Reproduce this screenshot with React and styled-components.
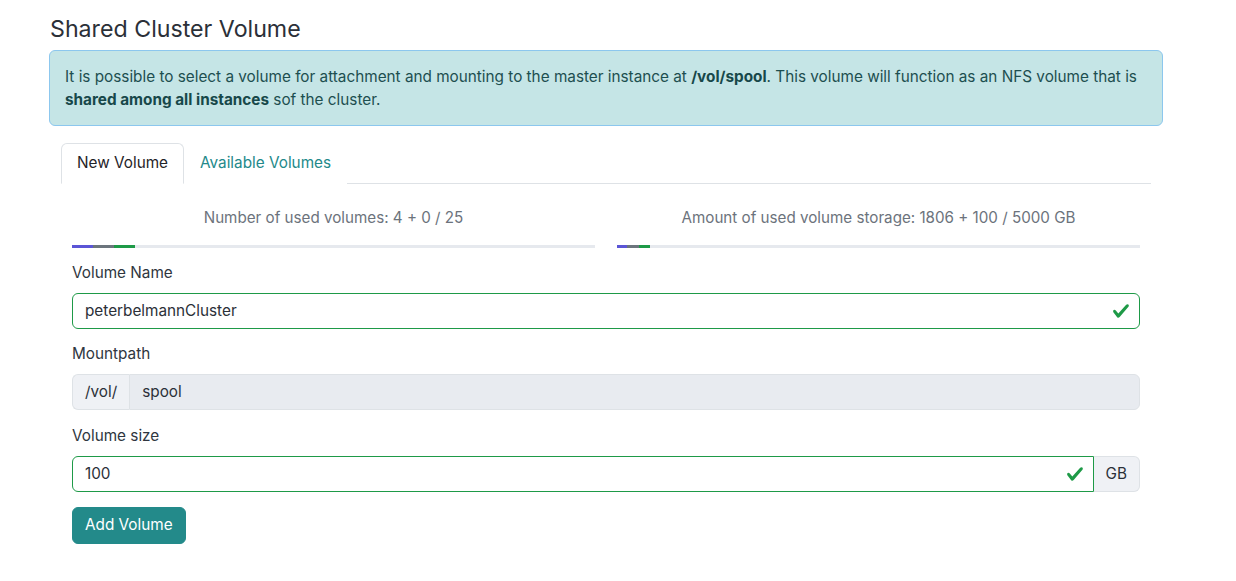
import React, { useState } from 'react'
import styled, { createGlobalStyle } from 'styled-components'

const GlobalStyle = createGlobalStyle`
  body {
    margin: 0;
    background: #ffffff;
    font-family: Inter, "Noto Sans", "Liberation Sans", sans-serif;
    font-size: 15.3px;
    color: #2b3038;
  }
  * { box-sizing: border-box; }
`
const Page = styled.div`
  width: 1114px;
  margin-left: 49px;
  padding-top: 15px;
`
const Title = styled.h2`
  margin: 0 0 6px 1px;
  font-size: 23.2px;
  font-weight: 400;
  line-height: 29px;
  color: #2b3038;
`
const Alert = styled.div`
  background: #c5e5e6;
  border: 1px solid #8cc7ee;
  border-radius: 6px;
  padding: 14px 15px;
  line-height: 23.2px;
  color: #1d4f50;
  b { font-weight: 700; color: #17484a; }
`
const Body = styled.div`
  padding: 0 12px;
  margin-top: 17px;
`
const Tabs = styled.div`
  display: flex;
  border-bottom: 1px solid #dee2e6;
`
const Tab = styled.button`
  font: inherit;
  line-height: 24px;
  padding: 7px 15px 8px;
  margin-bottom: -1px;
  border: 1px solid ${p => (p.active ? '#dee2e6' : 'transparent')};
  border-bottom-color: ${p => (p.active ? '#ffffff' : 'transparent')};
  border-radius: 6px 6px 0 0;
  background: #ffffff;
  color: ${p => (p.active ? '#1f2328' : '#23898a')};
  cursor: pointer;
`
const Content = styled.div`
  padding: 0 11px;
`
const Stats = styled.div`
  display: grid;
  grid-template-columns: 1fr 1fr;
  gap: 22px;
  margin-top: 22px;
`
const Stat = styled.div`
  display: flex;
  flex-direction: column;
  gap: 15px;
`
const StatText = styled.div`
  text-align: center;
  line-height: 24px;
  color: #6c737c;
  font-size: 15.2px;
`
const Bar = styled.div`
  display: flex;
  height: 3px;
  background: #e6e9ee;
`
const Segment = styled.div`
  height: 100%;
  background: ${p => p.color};
`
const Label = styled.label`
  display: block;
  line-height: 24px;
  margin: ${p => p.top || 13}px 0 8px;
  color: #2f3640;
`
const Group = styled.div`
  display: flex;
  position: relative;
`
const Field = styled.div`
  position: relative;
  flex: 1;
  display: flex;
`
const Input = styled.input`
  flex: 1;
  font: inherit;
  line-height: 24px;
  height: 36px;
  padding: 4px 12px 6px;
  border: 1px solid ${p => (p.valid ? '#1e9a47' : '#dee2e6')};
  border-radius: ${p => p.radius || '6px'};
  background: ${p => (p.disabled ? '#e8ebf0' : '#ffffff')};
  color: #2b3038;
  outline: none;
`
const Addon = styled.span`
  display: flex;
  align-items: center;
  padding: 0 12px 2px;
  height: 36px;
  background: #eff1f5;
  border: 1px solid #dee2e6;
  border-radius: ${p => p.radius};
  color: #2b3038;
  ${p => (p.left ? 'border-right: none;' : 'border-left: none;')}
`
const CheckMark = styled.svg`
  position: absolute;
  right: 10px;
  top: 9px;
  width: 18px;
  height: 18px;
`
const Button = styled.button`
  margin-top: 15px;
  font: inherit;
  line-height: 24px;
  padding: 5px 12px 6px;
  border: 1px solid #238a8a;
  border-radius: 6px;
  background: #238a8a;
  color: #ffffff;
  cursor: pointer;
`

function Check() {
  return (
    <CheckMark viewBox="0 0 8 8">
      <path fill="#1e9a47" d="M2.3 6.73.6 4.53c-.4-1.04.46-1.4 1.1-.8l1.1 1.4 3.4-3.8c.6-.63 1.6-.27 1.2.7l-4 4.6c-.43.5-.8.4-1.1.1z" />
    </CheckMark>
  )
}

const stats = [
  { text: 'Number of used volumes: 4 + 0 / 25', parts: [4, 4, 4] },
  { text: 'Amount of used volume storage: 1806 + 100 / 5000 GB', parts: [2, 2.3, 2] },
]

export default function App() {
  const [tab, setTab] = useState(0)
  const [name, setName] = useState('peterbelmannCluster')
  const [size, setSize] = useState('100')

  return (
    <Page>
      <GlobalStyle />
      <Title>Shared Cluster Volume</Title>
      <Alert>
        It is possible to select a volume for attachment and mounting to the master instance at <b>/vol/spool</b>. This volume will function as an NFS volume that is <b>shared among all instances</b> sof the cluster.
      </Alert>
      <Body>
        <Tabs>
          <Tab active={tab === 0} onClick={() => setTab(0)}>New Volume</Tab>
          <Tab active={tab === 1} onClick={() => setTab(1)}>Available Volumes</Tab>
        </Tabs>
        <Content>
          <Stats>
            {stats.map((s, i) => (
              <Stat key={i}>
                <StatText>{s.text}</StatText>
                <Bar>
                  <Segment color="#5b55d6" style={{ width: s.parts[0] + '%' }} />
                  <Segment color="#6c757d" style={{ width: s.parts[1] + '%' }} />
                  <Segment color="#1e9a47" style={{ width: s.parts[2] + '%' }} />
                </Bar>
              </Stat>
            ))}
          </Stats>
          <Label>Volume Name</Label>
          <Field>
            <Input valid value={name} onChange={e => setName(e.target.value)} />
            <Check />
          </Field>
          <Label>Mountpath</Label>
          <Group>
            <Addon left radius="6px 0 0 6px">/vol/</Addon>
            <Input disabled value="spool" radius="0 6px 6px 0" />
          </Group>
          <Label top={14}>Volume size</Label>
          <Group>
            <Field>
              <Input valid value={size} radius="6px 0 0 6px" onChange={e => setSize(e.target.value)} />
              <Check />
            </Field>
            <Addon radius="0 6px 6px 0">GB</Addon>
          </Group>
          <Button>Add Volume</Button>
        </Content>
      </Body>
    </Page>
  )
}
